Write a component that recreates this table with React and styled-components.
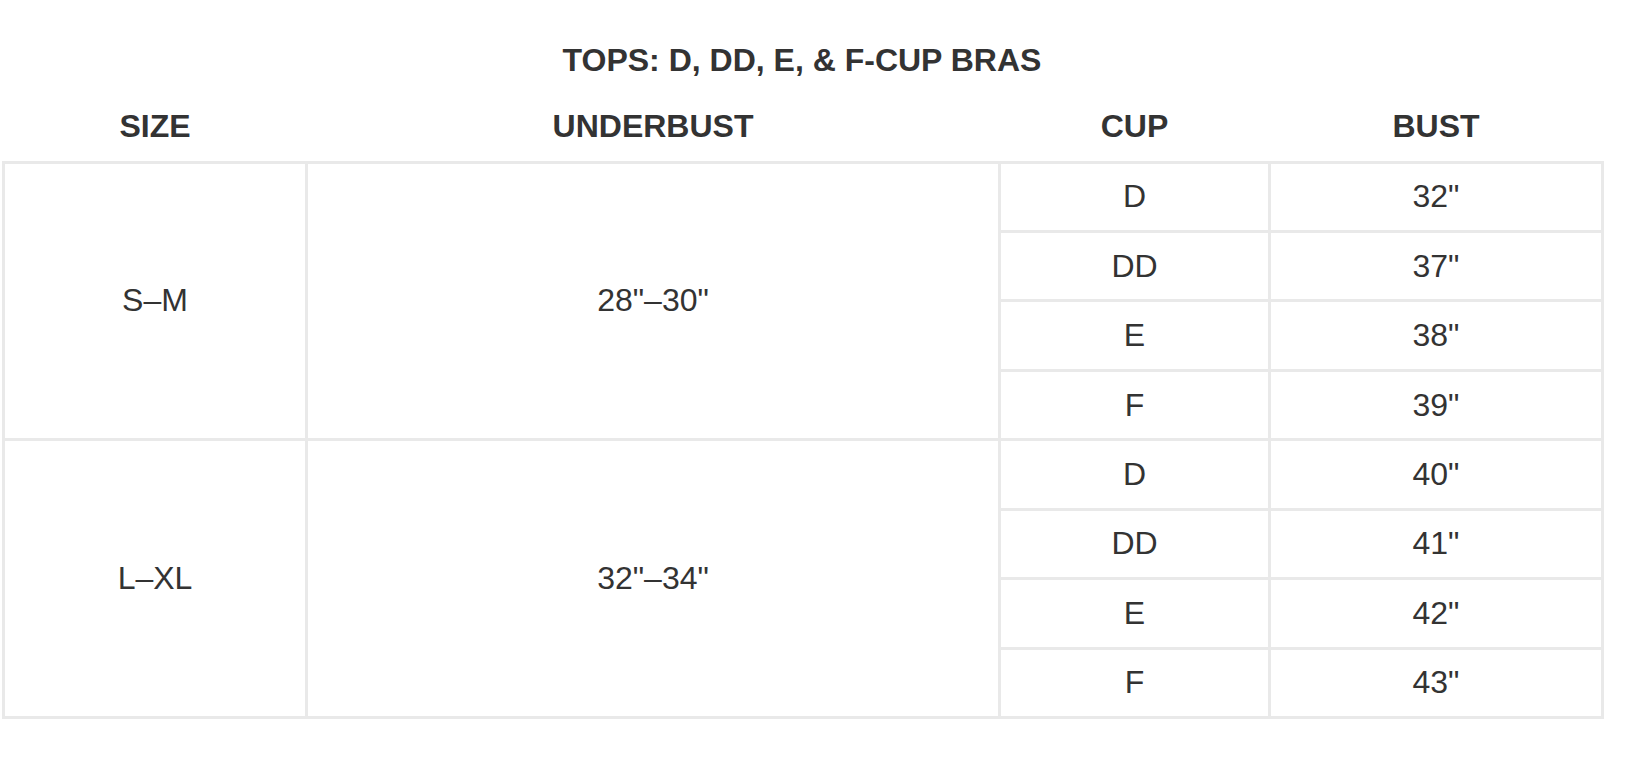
import React from 'react';
import styled, { createGlobalStyle } from 'styled-components';

const sizes = [
  {
    size: 'S–M',
    underbust: '28"–30"',
    cups: [
      ['D', '32"'],
      ['DD', '37"'],
      ['E', '38"'],
      ['F', '39"'],
    ],
  },
  {
    size: 'L–XL',
    underbust: '32"–34"',
    cups: [
      ['D', '40"'],
      ['DD', '41"'],
      ['E', '42"'],
      ['F', '43"'],
    ],
  },
];

export default function App() {
  return (
    <>
      <GlobalStyle />
      <Page>
        <Title>TOPS: D, DD, E, &amp; F-CUP BRAS</Title>
        <Table>
          <colgroup>
            <col style={{ width: '303px' }} />
            <col style={{ width: '693px' }} />
            <col style={{ width: '270px' }} />
            <col style={{ width: '333px' }} />
          </colgroup>
          <thead>
            <HeadRow>
              <Th>SIZE</Th>
              <Th>UNDERBUST</Th>
              <Th>CUP</Th>
              <Th>BUST</Th>
            </HeadRow>
          </thead>
          <tbody>
            {sizes.map((group) =>
              group.cups.map(([cup, bust], i) => (
                <Row key={group.size + cup}>
                  {i === 0 && (
                    <>
                      <Td rowSpan={group.cups.length}>{group.size}</Td>
                      <Td rowSpan={group.cups.length}>{group.underbust}</Td>
                    </>
                  )}
                  <Td>{cup}</Td>
                  <Td>{bust}</Td>
                </Row>
              ))
            )}
          </tbody>
        </Table>
      </Page>
    </>
  );
}

const GlobalStyle = createGlobalStyle`
  html, body {
    margin: 0;
    padding: 0;
    background: #ffffff;
  }
  body {
    font-family: "Liberation Sans", Arial, Helvetica, sans-serif;
    color: #333333;
  }
`;

const Page = styled.div`
  width: 1600px;
  padding: 40px 0 0 2px;
`;

const Title = styled.h1`
  margin: 0 0 12px;
  height: 40px;
  line-height: 40px;
  font-size: 32px;
  font-weight: 700;
  text-align: center;
  color: #333333;
`;

const Table = styled.table`
  width: 1600px;
  border-collapse: collapse;
  table-layout: fixed;
`;

const HeadRow = styled.tr`
  height: 70px;
`;

const Th = styled.th`
  padding: 0;
  font-size: 32px;
  font-weight: 700;
  text-align: center;
  vertical-align: middle;
  color: #333333;
`;

const Row = styled.tr`
  height: 69.45px;
`;

const Td = styled.td`
  padding: 0;
  border: 3px solid #e9e9e9;
  font-size: 32px;
  font-weight: 400;
  text-align: center;
  vertical-align: middle;
  color: #333333;
`;
